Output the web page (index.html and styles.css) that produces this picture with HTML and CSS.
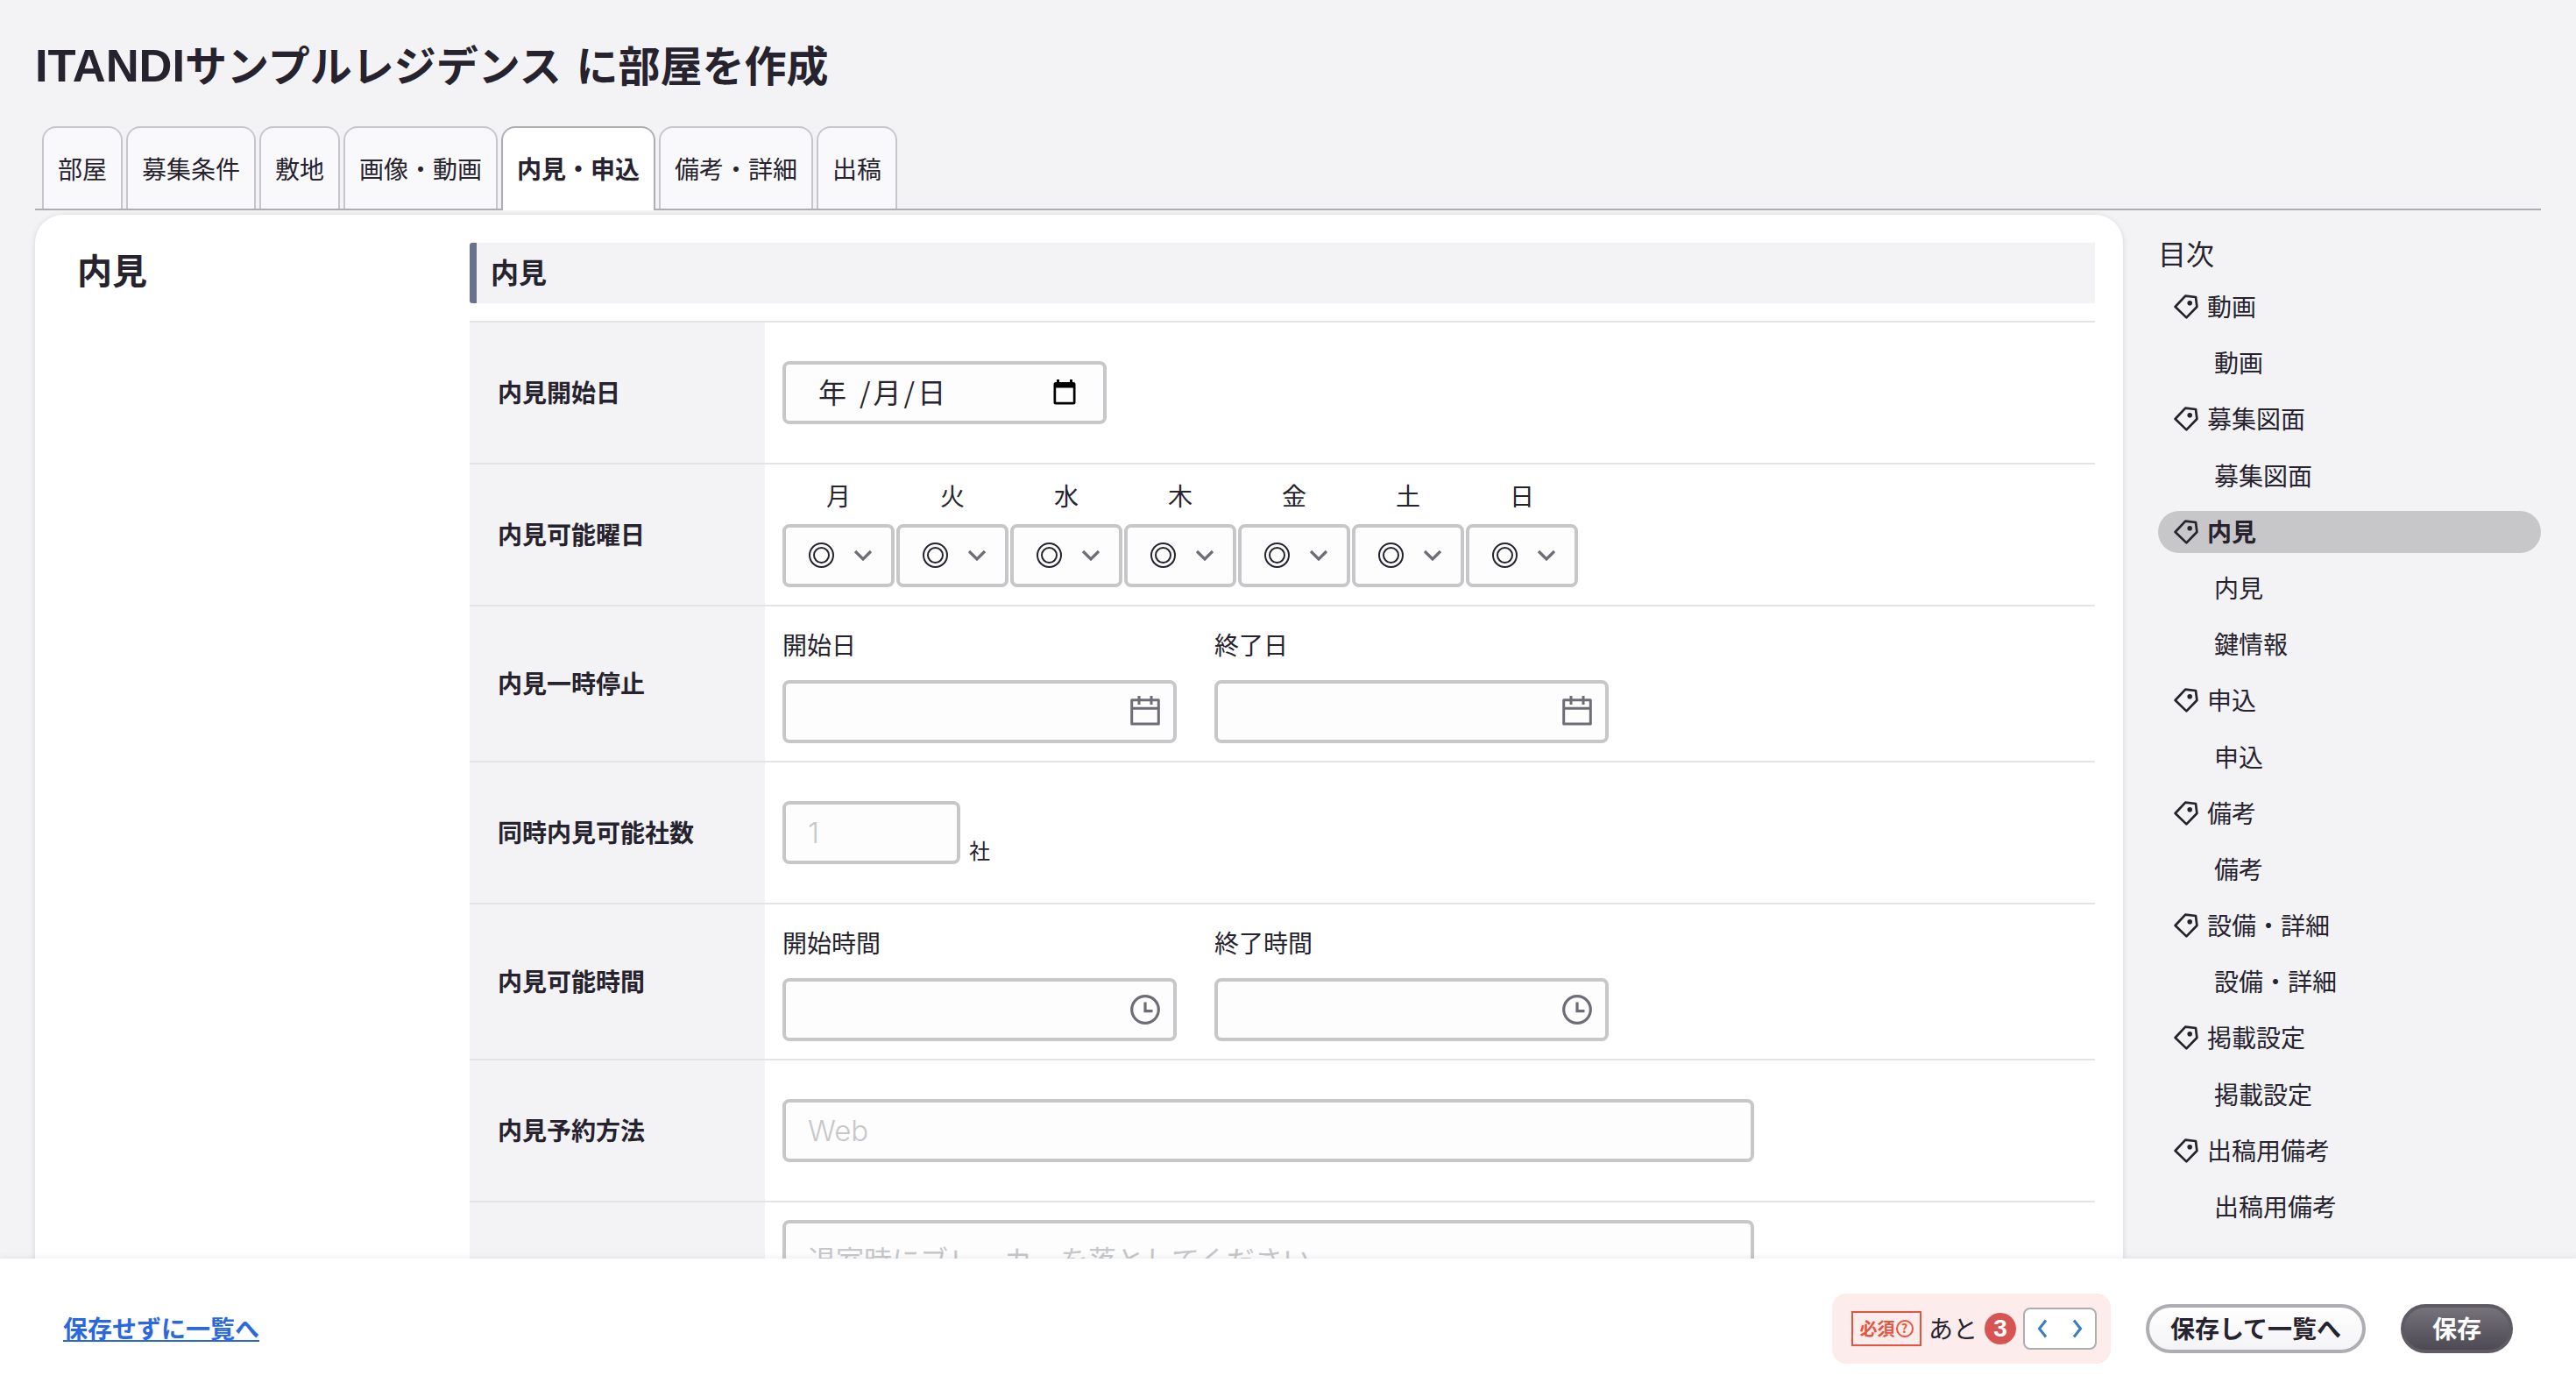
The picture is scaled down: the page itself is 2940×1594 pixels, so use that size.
FILE: index.html
```html
<!DOCTYPE html>
<html lang="ja">
<head>
    <meta charset="UTF-8">
    <meta name="viewport" content="width=device-width, initial-scale=1.0">
    <title>部屋を作成</title>
    <link rel="stylesheet" href="styles.css">
</head>
<body>
    <svg class="sprite" width="0" height="0">
        <symbol id="icon-tag" viewBox="0 0 28 28">
            <path d="M1.6 14L13.2 1.6L25 3L26.4 14L14.4 26.4Z" fill="none" stroke="currentColor" stroke-width="2.7" stroke-linejoin="round"/>
            <circle cx="18.2" cy="9.8" r="2.8" fill="currentColor"/>
        </symbol>
        <symbol id="icon-chevron" viewBox="0 0 22 14">
            <path d="M2 2L11 11L20 2" fill="none" stroke="currentColor" stroke-width="3.2"/>
        </symbol>
        <symbol id="icon-calendar" viewBox="0 0 34 34">
            <path d="M1.7 4.7H32.3V31.9H1.7ZM1.7 14.3H32.3M10 0V10M24 0V10" fill="none" stroke="currentColor" stroke-width="3" stroke-linejoin="round"/>
        </symbol>
        <symbol id="icon-clock" viewBox="0 0 34 34">
            <circle cx="17" cy="17" r="15.3" fill="none" stroke="currentColor" stroke-width="3.2"/>
            <path d="M17 8.5V18.7H25.5" fill="none" stroke="currentColor" stroke-width="3.2"/>
        </symbol>
    </svg>

    <div class="page">
        <h1 class="page-title"><span class="latin">ITANDI</span>サンプルレジデンス に部屋を作成</h1>

        <nav class="tabs">
            <a class="tab">部屋</a>
            <a class="tab">募集条件</a>
            <a class="tab">敷地</a>
            <a class="tab">画像・動画</a>
            <a class="tab tab-active">内見・申込</a>
            <a class="tab">備考・詳細</a>
            <a class="tab">出稿</a>
        </nav>

        <div class="layout">
            <main class="card">
                <h2 class="card-title">内見</h2>
                <div class="card-body">
                    <h3 class="section-title">内見</h3>
                    <div class="form-row">
                        <div class="form-label">内見開始日</div>
                        <div class="form-field">
                            <div class="input input-native-date">
                                <span>年</span><span class="slash-first">/</span><span>月</span><span>/</span><span>日</span>
                                <svg class="native-icon" width="26" height="29" viewBox="0 0 26 29">
                                    <path d="M3 3H23Q25.5 3 25.5 5.5V26Q25.5 28.5 23 28.5H3Q.5 28.5 .5 26V5.5Q.5 3 3 3ZM3.2 9.5V25.8H22.8V9.5Z" fill="#000" fill-rule="evenodd"/>
                                    <path d="M5.5 0V5M20.5 0V5" stroke="#000" stroke-width="3"/>
                                </svg>
                            </div>
                        </div>
                    </div>
                    <div class="form-row">
                        <div class="form-label">内見可能曜日</div>
                        <div class="form-field">
                            <div class="days">
                                <div class="day"><span>月</span><div class="input select"><i class="mark"></i><svg width="22" height="14"><use href="#icon-chevron"/></svg></div></div>
                                <div class="day"><span>火</span><div class="input select"><i class="mark"></i><svg width="22" height="14"><use href="#icon-chevron"/></svg></div></div>
                                <div class="day"><span>水</span><div class="input select"><i class="mark"></i><svg width="22" height="14"><use href="#icon-chevron"/></svg></div></div>
                                <div class="day"><span>木</span><div class="input select"><i class="mark"></i><svg width="22" height="14"><use href="#icon-chevron"/></svg></div></div>
                                <div class="day"><span>金</span><div class="input select"><i class="mark"></i><svg width="22" height="14"><use href="#icon-chevron"/></svg></div></div>
                                <div class="day"><span>土</span><div class="input select"><i class="mark"></i><svg width="22" height="14"><use href="#icon-chevron"/></svg></div></div>
                                <div class="day"><span>日</span><div class="input select"><i class="mark"></i><svg width="22" height="14"><use href="#icon-chevron"/></svg></div></div>
                            </div>
                        </div>
                    </div>
                    <div class="form-row form-row-tall">
                        <div class="form-label">内見一時停止</div>
                        <div class="form-field range">
                            <div class="range-item">
                                <span>開始日</span>
                                <div class="input input-icon"><svg width="34" height="34"><use href="#icon-calendar"/></svg></div>
                            </div>
                            <div class="range-item">
                                <span>終了日</span>
                                <div class="input input-icon"><svg width="34" height="34"><use href="#icon-calendar"/></svg></div>
                            </div>
                        </div>
                    </div>
                    <div class="form-row">
                        <div class="form-label">同時内見可能社数</div>
                        <div class="form-field">
                            <div class="input input-count">1</div>
                            <span class="unit">社</span>
                        </div>
                    </div>
                    <div class="form-row form-row-tall">
                        <div class="form-label">内見可能時間</div>
                        <div class="form-field range">
                            <div class="range-item">
                                <span>開始時間</span>
                                <div class="input input-icon input-time"><svg width="34" height="34"><use href="#icon-clock"/></svg></div>
                            </div>
                            <div class="range-item">
                                <span>終了時間</span>
                                <div class="input input-icon input-time"><svg width="34" height="34"><use href="#icon-clock"/></svg></div>
                            </div>
                        </div>
                    </div>
                    <div class="form-row">
                        <div class="form-label">内見予約方法</div>
                        <div class="form-field">
                            <div class="input input-wide">Web</div>
                        </div>
                    </div>
                    <div class="form-row form-row-memo">
                        <div class="form-label"></div>
                        <div class="form-field">
                            <div class="input textarea">退室時にブレーカーを落としてください</div>
                        </div>
                    </div>
                </div>
            </main>

            <aside class="toc">
                <div class="toc-title">目次</div>
                <a class="toc-item"><svg width="28" height="28"><use href="#icon-tag"/></svg><span>動画</span></a>
                <a class="toc-item toc-sub"><span>動画</span></a>
                <a class="toc-item"><svg width="28" height="28"><use href="#icon-tag"/></svg><span>募集図面</span></a>
                <a class="toc-item toc-sub"><span>募集図面</span></a>
                <a class="toc-item toc-active"><svg width="28" height="28"><use href="#icon-tag"/></svg><span>内見</span></a>
                <a class="toc-item toc-sub"><span>内見</span></a>
                <a class="toc-item toc-sub"><span>鍵情報</span></a>
                <a class="toc-item"><svg width="28" height="28"><use href="#icon-tag"/></svg><span>申込</span></a>
                <a class="toc-item toc-sub"><span>申込</span></a>
                <a class="toc-item"><svg width="28" height="28"><use href="#icon-tag"/></svg><span>備考</span></a>
                <a class="toc-item toc-sub"><span>備考</span></a>
                <a class="toc-item"><svg width="28" height="28"><use href="#icon-tag"/></svg><span>設備・詳細</span></a>
                <a class="toc-item toc-sub"><span>設備・詳細</span></a>
                <a class="toc-item"><svg width="28" height="28"><use href="#icon-tag"/></svg><span>掲載設定</span></a>
                <a class="toc-item toc-sub"><span>掲載設定</span></a>
                <a class="toc-item"><svg width="28" height="28"><use href="#icon-tag"/></svg><span>出稿用備考</span></a>
                <a class="toc-item toc-sub"><span>出稿用備考</span></a>
            </aside>
        </div>
    </div>

    <footer class="footer">
        <a href="#" class="back-link">保存せずに一覧へ</a>
        <div class="required">
            <div class="required-badge">必須<span class="help">?</span></div>
            <span class="required-text">あと</span>
            <span class="required-count">3</span>
            <div class="pager">
                <svg width="12" height="22" viewBox="0 0 12 22"><path d="M10 1.5L2.5 11L10 20.5" fill="none" stroke="currentColor" stroke-width="3"/></svg>
                <svg width="12" height="22" viewBox="0 0 12 22"><path d="M2 1.5L9.5 11L2 20.5" fill="none" stroke="currentColor" stroke-width="3"/></svg>
            </div>
        </div>
        <button class="btn">保存して一覧へ</button>
        <button class="btn btn-primary">保存</button>
    </footer>
</body>
</html>
```
FILE: styles.css
```css
* {
    margin: 0;
    padding: 0;
    box-sizing: border-box;
}

body {
    font-family: 'Noto Sans CJK JP', sans-serif;
    font-size: 28px;
    line-height: 1;
    background: #f3f3f6;
    color: #26232e;
    height: 1594px;
    overflow: hidden;
    display: flex;
    flex-direction: column;
}

.sprite {
    position: absolute;
}

.page {
    flex: 1;
    min-height: 0;
    overflow: hidden;
    padding: 0 40px;
}

.page-title {
    height: 144px;
    padding-top: 4px;
    font-size: 48px;
    line-height: 136px;
    font-weight: 700;
    word-spacing: 6px;
}

.latin {
    font-family: 'Liberation Sans', sans-serif;
    font-size: 52.5px;
    line-height: 1;
}

/* tabs */

.tabs {
    display: flex;
    gap: 4px;
    height: 96px;
    padding-left: 8px;
    border-bottom: 2px solid #aeaeb2;
}

.tab {
    height: 94px;
    padding: 0 16px;
    border: 2px solid #c7c7cb;
    border-bottom: 0;
    border-radius: 16px 16px 0 0;
    background: #f9f9fc;
    line-height: 93px;
}

.tab-active {
    height: 96px;
    border-color: #aeaeb2;
    background: #fff;
    font-weight: 700;
}

/* main card */

.layout {
    display: flex;
    gap: 40px;
    padding-top: 5px;
}

.card {
    display: flex;
    width: 2383px;
    height: 1300px;
    padding: 32px 32px 0 48px;
    border-radius: 32px;
    background: #fff;
    box-shadow: 0 1px 6px rgba(38, 35, 46, 0.14);
}

.card-title {
    width: 448px;
    font-size: 40px;
    line-height: 60px;
}

.card-body {
    flex: 1;
}

.section-title {
    height: 69px;
    margin-bottom: 20px;
    padding-left: 16px;
    border-left: 8px solid #68728c;
    border-radius: 3px 0 0 3px;
    background: #f3f3f6;
    font-size: 32px;
    line-height: 65px;
}

.form-row {
    display: flex;
    height: 162px;
    border-top: 2px solid #e4e4e6;
}

.form-row-tall {
    height: 178px;
}

.form-row-memo {
    height: 240px;
}

.form-label {
    display: flex;
    align-items: center;
    width: 337px;
    padding: 0 0 2px 32px;
    background: #f3f3f6;
    font-weight: 700;
}

.form-field {
    display: flex;
    align-items: center;
    padding-left: 20px;
}

.form-row-memo .form-field {
    align-items: flex-start;
    padding-top: 20px;
}

.input {
    display: flex;
    align-items: center;
    height: 72px;
    padding: 0 25px;
    border: 4px solid #c7c7ca;
    border-radius: 8px;
    background: #fdfdfe;
    color: #c7c7ca;
    font-size: 32px;
}

.input-native-date {
    width: 370px;
    padding: 0 31px 4px 37px;
    color: #26232e;
}

.input-native-date span {
    margin-right: 3px;
}

.input-native-date .slash-first {
    margin-left: 12px;
}

.native-icon {
    margin: 2px 0 0 auto;
}

.days {
    display: flex;
    gap: 2px;
}

.day {
    width: 128px;
    text-align: center;
}

.day span {
    display: block;
    height: 48px;
    line-height: 30px;
}

.select {
    justify-content: space-between;
    padding: 0 21px 0 26px;
    color: #6f6c76;
}

.mark {
    width: 29px;
    height: 29px;
    margin-bottom: 2px;
    border: 2px solid #26232e;
    border-radius: 50%;
    padding: 3px;
}

.mark::before {
    content: '';
    display: block;
    height: 15px;
    border: 2px solid #26232e;
    border-radius: 50%;
}

.range {
    gap: 43px;
    padding-top: 8px;
}

.range-item {
    width: 450px;
}

.range-item span {
    display: block;
    height: 56px;
    line-height: 30px;
}

.input-icon {
    justify-content: flex-end;
    padding: 0 15px 3px 0;
    color: #6f6c76;
}

.input-time {
    padding-bottom: 0;
}

.input-count,
.input-wide {
    font-family: Inter, sans-serif;
    font-size: 33px;
    font-weight: 300;
}

.input-count {
    width: 203px;
}

.unit {
    padding: 40px 0 0 10px;
    font-size: 24px;
}

.input-wide {
    width: 1109px;
}

.textarea {
    width: 1109px;
    height: 200px;
    padding-top: 24px;
    align-items: flex-start;
}

/* table of contents */

.toc {
    flex: 1;
}

.toc-title {
    height: 81px;
    font-size: 32px;
    line-height: 86px;
}

.toc-item {
    display: flex;
    align-items: center;
    gap: 10px;
    height: 48px;
    margin-bottom: 16.2px;
    padding-left: 18px;
    border-radius: 24px;
}

.toc-item span {
    padding-bottom: 2px;
}

.toc-sub {
    padding-left: 64px;
}

.toc-active {
    background: #c7c7ca;
    font-weight: 700;
}

/* bottom bar */

.footer {
    display: flex;
    align-items: center;
    height: 158px;
    padding: 2px 72px 0;
    background: #fff;
    box-shadow: 0 0 8px rgba(38, 35, 46, 0.1);
    position: relative;
}

.back-link {
    margin-right: auto;
    padding-bottom: 3px;
    color: #2b68dc;
    font-weight: 700;
    text-decoration-thickness: 2px;
    text-underline-offset: 2px;
}

.required {
    display: flex;
    align-items: center;
    height: 80px;
    width: 318px;
    padding-left: 22px;
    border-radius: 16px;
    background: #fceceb;
}

.required-badge {
    display: flex;
    align-items: center;
    justify-content: center;
    width: 80px;
    height: 40px;
    border: 2px solid #e4553f;
    color: #e4553f;
    font-size: 20px;
    font-weight: 700;
}

.help {
    width: 20px;
    height: 20px;
    margin-left: 1px;
    border: 2px solid #e4553f;
    border-radius: 50%;
    font-size: 14px;
    line-height: 15px;
    text-align: center;
}

.required-text {
    width: 72px;
    padding: 0 0 2px 8px;
}

.required-count {
    width: 36px;
    height: 36px;
    border-radius: 50%;
    background: #d65452;
    color: #fff;
    font-family: 'Liberation Sans', sans-serif;
    font-weight: 700;
    line-height: 35px;
    text-align: center;
}

.pager {
    display: flex;
    align-items: center;
    justify-content: space-between;
    width: 84px;
    height: 48px;
    margin-left: 8px;
    padding: 0 14px;
    border: 2px solid #aeaeb2;
    border-radius: 8px;
    background: #fff;
    color: #3a7cc0;
}

.btn {
    width: 251px;
    height: 56px;
    margin-left: 40px;
    padding-bottom: 2px;
    border: 4px solid #aeaeb2;
    border-radius: 28px;
    background: linear-gradient(#fff, #f3f3f6) border-box;
    color: #26232e;
    font: 700 28px/46px 'Noto Sans CJK JP', sans-serif;
}

.btn-primary {
    width: 128px;
    border-color: #5e5b64;
    background: linear-gradient(#79767e, #4a4650) border-box;
    color: #fff;
}
```
